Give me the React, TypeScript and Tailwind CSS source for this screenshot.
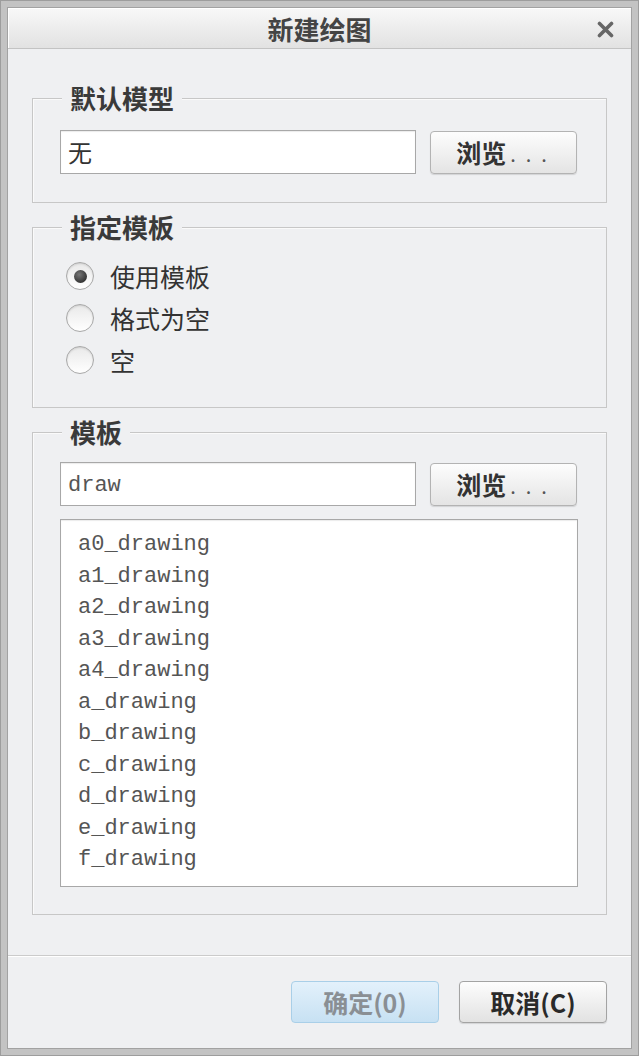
import React from 'react';

const cjk = "font-['Noto_Sans_CJK_SC','Noto_Sans',sans-serif]";
const mono = "font-['Liberation_Mono','DejaVu_Sans_Mono',monospace]";

const templates = [
  'a0_drawing',
  'a1_drawing',
  'a2_drawing',
  'a3_drawing',
  'a4_drawing',
  'a_drawing',
  'b_drawing',
  'c_drawing',
  'd_drawing',
  'e_drawing',
  'f_drawing',
];

function GroupLabel({ children }: { children: React.ReactNode }) {
  return (
    <div className="-mt-[16px] ml-[29px] w-fit bg-[#eff0f2] px-[8px] text-[26px] leading-[30px] font-bold text-[#3a3a3a]">
      {children}
    </div>
  );
}

function BrowseButton() {
  return (
    <button className="flex h-[43px] w-[147px] items-center justify-center rounded-[4px] border border-[#b3b3b3] bg-gradient-to-b from-[#fdfdfd] to-[#e4e4e4] pl-[6px] shadow-[0_1px_1px_rgba(0,0,0,0.12)]">
      <span className="text-[25px] leading-none font-bold text-[#333]">浏览</span>
      <span className="ml-[4px] mt-[4px] text-[20px] leading-none tracking-[10px] text-[#555]">...</span>
    </button>
  );
}

function Radio({ checked, label }: { checked?: boolean; label: string }) {
  return (
    <div className="flex h-[42px] items-center">
      <div className="flex h-[28px] w-[28px] items-center justify-center rounded-full border border-[#a9a9a9] bg-gradient-to-b from-[#e9e9e9] to-white shadow-[inset_0_1px_2px_rgba(0,0,0,0.12)]">
        {checked && (
          <div className="h-[13px] w-[13px] rounded-full bg-[radial-gradient(circle_at_40%_35%,#777,#1a1a1a)]" />
        )}
      </div>
      <span className="ml-[16px] text-[25px] leading-none text-[#333]">{label}</span>
    </div>
  );
}

export default function App() {
  return (
    <div className={`h-[1056px] w-[639px] border border-[#9d9d9d] bg-[#c3c3c3] p-[6px] ${cjk}`}>
      <div className="flex h-full flex-col border border-[#a2a2a2] bg-[#eff0f2]">
        {/* Title bar */}
        <div className="relative flex h-[41px] items-center justify-center border-b border-[#c3c3c3] bg-gradient-to-b from-[#f8f8f8] to-[#e2e2e2] pt-[2px] shadow-[inset_1px_1px_0_#fff]">
          <span className="text-[26px] leading-none font-bold text-[#444]">新建绘图</span>
          <svg
            className="absolute right-[17px] top-[13px]"
            width="17"
            height="17"
            viewBox="0 0 17 17"
          >
            <path d="M2.5 2.5 L14.5 14.5 M14.5 2.5 L2.5 14.5" stroke="#666" strokeWidth="3.6" strokeLinecap="round" />
          </svg>
        </div>

        {/* Body */}
        <div className="flex flex-1 flex-col px-[24px] pt-[49px]">
          {/* 默认模型 */}
          <div className="border border-[#c7c7c7] pb-[28px] shadow-[inset_1px_1px_0_#fafafa]">
            <GroupLabel>默认模型</GroupLabel>
            <div className="mt-[17px] flex items-center pl-[27px]">
              <div className="flex h-[44px] w-[356px] items-center border border-[#a8a8a8] bg-white pl-[7px] shadow-[inset_0_1px_1px_rgba(0,0,0,0.08)]">
                <span className="text-[24px] leading-none text-[#333]">无</span>
              </div>
              <div className="ml-[14px]">
                <BrowseButton />
              </div>
            </div>
          </div>

          {/* 指定模板 */}
          <div className="mt-[24px] border border-[#c7c7c7] pb-[26px] shadow-[inset_1px_1px_0_#fafafa]">
            <GroupLabel>指定模板</GroupLabel>
            <div className="mt-[13px] flex flex-col pl-[33px]">
              <Radio checked label="使用模板" />
              <Radio label="格式为空" />
              <Radio label="空" />
            </div>
          </div>

          {/* 模板 */}
          <div className="mt-[24px] border border-[#c7c7c7] pb-[27px] shadow-[inset_1px_1px_0_#fafafa]">
            <GroupLabel>模板</GroupLabel>
            <div className="mt-[15px] flex items-center pl-[27px]">
              <div className="flex h-[44px] w-[356px] items-center border border-[#a8a8a8] bg-white pl-[7px] pt-[3px] shadow-[inset_0_1px_1px_rgba(0,0,0,0.08)]">
                <span className={`${mono} text-[22px] leading-none text-[#555]`}>draw</span>
              </div>
              <div className="ml-[14px]">
                <BrowseButton />
              </div>
            </div>
            <div className="ml-[27px] mt-[13px] h-[368px] w-[518px] border border-[#a8a8a8] bg-white pl-[17px] pt-[9px] shadow-[inset_0_1px_1px_rgba(0,0,0,0.08)]">
              {templates.map((t) => (
                <div key={t} className={`${mono} text-[22px] leading-[31.5px] text-[#555]`}>
                  {t}
                </div>
              ))}
            </div>
          </div>

          <div className="flex-1" />
        </div>

        {/* Footer */}
        <div className="flex h-[93px] items-start justify-end gap-[20px] border-t border-[#cbcbcb] pr-[24px] pt-[25px] shadow-[inset_0_1px_0_#fff]">
          <button className="flex h-[42px] w-[148px] items-center justify-center rounded-[4px] border border-[#a9cfe8] bg-gradient-to-b from-[#e3f1fb] to-[#c7e1f3]">
            <span className="text-[25px] leading-none font-bold text-[#8a8f94]">确定(0)</span>
          </button>
          <button className="flex h-[42px] w-[148px] items-center justify-center rounded-[4px] border border-[#a3a3a3] bg-gradient-to-b from-[#fdfdfd] to-[#e2e2e2] shadow-[0_1px_1px_rgba(0,0,0,0.12)]">
            <span className="text-[25px] leading-none font-bold text-[#2a2a2a]">取消(C)</span>
          </button>
        </div>
      </div>
    </div>
  );
}
